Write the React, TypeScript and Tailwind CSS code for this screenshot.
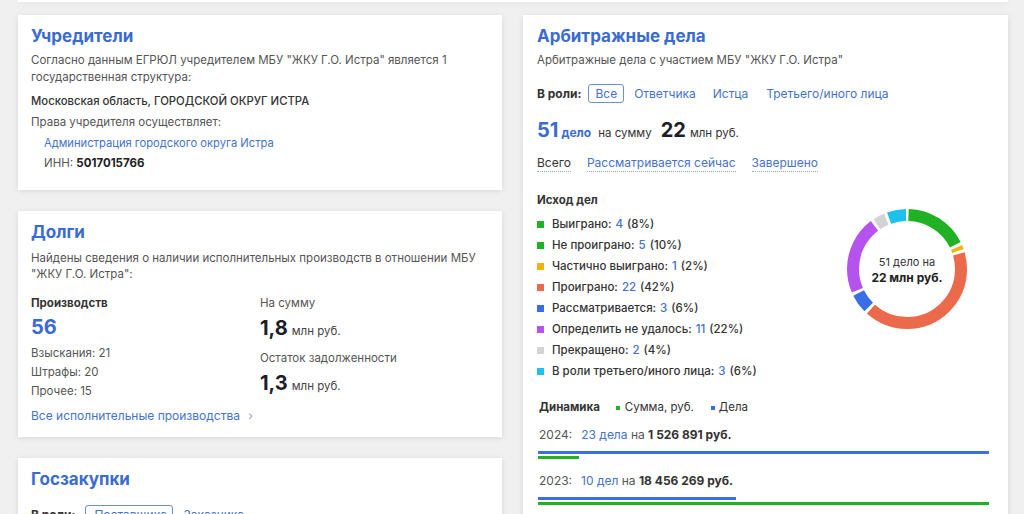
import React from "react";

const segs = [
  { p: 18, c: "#20b224" },
  { p: 2, c: "#f2b20c" },
  { p: 42, c: "#ea6a4b" },
  { p: 6, c: "#3a6ee6" },
  { p: 22, c: "#b553ee" },
  { p: 4, c: "#d3d3d3" },
  { p: 6, c: "#1fc0ee" },
];

function Donut() {
  const r = 54;
  const C = 2 * Math.PI * r;
  const gap = 3;
  let acc = 0;
  return (
    <div className="relative w-[120px] h-[120px]">
      <svg width="120" height="120" viewBox="0 0 120 120" className="-rotate-90">
        {segs.map((s, i) => {
          const len = (s.p / 100) * C;
          const el = (
            <circle
              key={i}
              cx="60"
              cy="60"
              r={r}
              fill="none"
              stroke={s.c}
              strokeWidth="12"
              strokeDasharray={`${len - gap} ${C - len + gap}`}
              strokeDashoffset={-(acc + gap / 2)}
            />
          );
          acc += len;
          return el;
        })}
      </svg>
      <div className="absolute inset-0 flex flex-col items-center justify-center pt-[2px]">
        <div className="text-[11px] leading-[15px] text-[#333]">51 дело на</div>
        <div className="text-[12px] leading-[15px] font-bold text-[#222]">22 млн руб.</div>
      </div>
    </div>
  );
}

const legend = [
  { c: "#20b224", t: "Выиграно:", n: "4", p: "(8%)" },
  { c: "#20b224", t: "Не проиграно:", n: "5", p: "(10%)" },
  { c: "#f2b20c", t: "Частично выиграно:", n: "1", p: "(2%)" },
  { c: "#ea6a4b", t: "Проиграно:", n: "22", p: "(42%)" },
  { c: "#3a6ee6", t: "Рассматривается:", n: "3", p: "(6%)" },
  { c: "#b553ee", t: "Определить не удалось:", n: "11", p: "(22%)" },
  { c: "#d3d3d3", t: "Прекращено:", n: "2", p: "(4%)" },
  { c: "#1fc0ee", t: "В роли третьего/иного лица:", n: "3", p: "(6%)" },
];

const card = "bg-white shadow-[0_1px_6px_rgba(0,0,0,0.10)]";
const title = "text-[17px] leading-[24px] font-bold text-[#3a6bd3]";

export default function App() {
  return (
    <div className="h-[514px] overflow-hidden bg-[#f0f0f0] font-['Inter',sans-serif] text-[11.5px] text-[#555]">
      <div className={`h-[2px] ml-[18px] mr-[16px] ${card}`} />
      <div className="grid grid-cols-[484px_485px] gap-[21px] pl-[18px] pr-[16px] mt-[13px] items-start">
        {/* left column */}
        <div className="flex flex-col gap-[21px]">
          <div className={`${card} pt-[9px] px-[13px] pb-[18px]`}>
            <div className={title}>Учредители</div>
            <div className="mt-[4px] leading-[17px]">
              Согласно данным ЕГРЮЛ учредителем МБУ "ЖКУ Г.О. Истра" является 1 государственная структура:
            </div>
            <div className="mt-[7px] leading-[17px] text-[11.3px] font-medium text-[#333]">
              Московская область, ГОРОДСКОЙ ОКРУГ ИСТРА
            </div>
            <div className="mt-[4px] leading-[17px]">Права учредителя осуществляет:</div>
            <div className="pl-[13px]">
              <div className="mt-[4px] leading-[17px] text-[#4573c9] text-[11.2px]">Администрация городского округа Истра</div>
              <div className="mt-[3px] leading-[17px]">
                ИНН: <span className="font-bold text-[#222]">5017015766</span>
              </div>
            </div>
          </div>

          <div className={`${card} pt-[9px] px-[13px] pb-[13px]`}>
            <div className={title}>Долги</div>
            <div className="mt-[6px] leading-[16px]">
              Найдены сведения о наличии исполнительных производств в отношении МБУ "ЖКУ Г.О. Истра":
            </div>
            <div className="grid grid-cols-2 mt-[13px]">
              <div>
                <div className="leading-[17px] font-bold text-[#333]">Производств</div>
                <div className="mt-[3px] leading-[24px] text-[20px] font-bold text-[#3a6bd3]">56</div>
                <div className="mt-[5px] leading-[19px]">Взыскания: 21</div>
                <div className="leading-[19px]">Штрафы: 20</div>
                <div className="leading-[19px]">Прочее: 15</div>
              </div>
              <div>
                <div className="leading-[17px]">На сумму</div>
                <div className="mt-[4px] leading-[24px]">
                  <span className="text-[20px] font-bold text-[#1e1e2a]">1,8</span>
                  <span className="ml-[4px] text-[#444]">млн руб.</span>
                </div>
                <div className="mt-[7px] leading-[17px]">Остаток задолженности</div>
                <div className="mt-[4px] leading-[24px]">
                  <span className="text-[20px] font-bold text-[#1e1e2a]">1,3</span>
                  <span className="ml-[4px] text-[#444]">млн руб.</span>
                </div>
              </div>
            </div>
            <div className="mt-[6px] leading-[17px] text-[12px] text-[#4573c9]">
              Все исполнительные производства <span className="ml-[5px] text-[#8aa3d6]">›</span>
            </div>
          </div>

          <div className={`${card} pt-[9px] px-[13px] pb-[20px]`}>
            <div className={title}>Госзакупки</div>
            <div className="mt-[14px] flex items-center gap-[10px] text-[12px]">
              <span className="font-bold text-[#333]">В роли:</span>
              <span className="h-[19px] w-[88px] px-[8px] flex items-center rounded-[3px] border border-[#6d8fce] text-[#4573c9]">Поставщика</span>
              <span className="text-[#4573c9]">Заказчика</span>
            </div>
          </div>
        </div>

        {/* right column */}
        <div className={`${card} pt-[9px] pl-[14px] pr-[14px] pb-[20px]`}>
          <div className={title}>Арбитражные дела</div>
          <div className="mt-[4px] leading-[17px]">Арбитражные дела с участием МБУ "ЖКУ Г.О. Истра"</div>
          <div className="mt-[15px] flex items-center h-[19px] text-[12px]">
            <span className="font-bold text-[#333]">В роли:</span>
            <span className="ml-[7px] h-[19px] px-[6px] flex items-center rounded-[3px] border border-[#6d8fce] text-[#4573c9]">Все</span>
            <span className="ml-[10px] text-[#4573c9]">Ответчика</span>
            <span className="ml-[17px] text-[#4573c9]">Истца</span>
            <span className="ml-[18px] text-[#4573c9]">Третьего/иного лица</span>
          </div>
          <div className="mt-[15px] flex items-baseline leading-[24px]">
            <span className="text-[20px] font-bold text-[#3a6bd3]">51</span>
            <span className="ml-[3px] text-[12px] font-bold text-[#3a6bd3]">дело</span>
            <span className="ml-[7px] text-[#333]">на сумму</span>
            <span className="ml-[9px] text-[20px] font-bold text-[#1e1e2a]">22</span>
            <span className="ml-[4px] text-[#333]">млн руб.</span>
          </div>
          <div className="mt-[10px] flex items-center gap-[16px] leading-[16px] text-[12px]">
            <span className="text-[#333] border-b border-dotted border-[#9aa9c6]">Всего</span>
            <span className="text-[#4573c9] border-b border-dotted border-[#9aa9c6]">Рассматривается сейчас</span>
            <span className="text-[#4573c9] border-b border-dotted border-[#9aa9c6]">Завершено</span>
          </div>

          <div className="mt-[20px] flex justify-between">
            <div>
              <div className="leading-[17px] font-bold text-[#333]">Исход дел</div>
              <div className="mt-[5px]">
                {legend.map((l, i) => (
                  <div key={i} className="h-[21px] flex items-center font-medium text-[#333]">
                    <span className="w-[7px] h-[7px] mr-[8px]" style={{ background: l.c }} />
                    <span>{l.t}</span>
                    <span className="ml-[4px] text-[#4573c9]">{l.n}</span>
                    <span className="ml-[4px]">{l.p}</span>
                  </div>
                ))}
              </div>
            </div>
            <div className="mt-[17px] mr-[27px]">
              <Donut />
            </div>
          </div>

          <div className="mt-[17px] pl-[2px] text-[12px]">
            <div className="flex items-center leading-[17px] text-[11.5px]">
              <span className="font-bold text-[#333]">Динамика</span>
              <span className="ml-[16px] w-[4px] h-[4px] bg-[#20b224]" />
              <span className="ml-[5px] text-[#333]">Сумма, руб.</span>
              <span className="ml-[17px] w-[4px] h-[4px] bg-[#3a6ee6]" />
              <span className="ml-[4px] text-[#333]">Дела</span>
            </div>
            <div className="mt-[10px] leading-[17px]">
              <span>2024:</span>
              <span className="ml-[9px] text-[#4573c9]">23 дела</span>
              <span> на </span>
              <span className="font-bold text-[#333]">1 526 891 руб.</span>
            </div>
            <div className="mt-[8px] w-[451px] -ml-[1px]">
              <div className="h-[3px] bg-[#3a6ee6]" style={{ width: "100%" }} />
              <div className="mt-[2px] h-[3px] bg-[#20b224]" style={{ width: "9%" }} />
            </div>
            <div className="mt-[13px] leading-[17px]">
              <span>2023:</span>
              <span className="ml-[9px] text-[#4573c9]">10 дел</span>
              <span> на </span>
              <span className="font-bold text-[#333]">18 456 269 руб.</span>
            </div>
            <div className="mt-[8px] w-[451px] -ml-[1px]">
              <div className="h-[3px] bg-[#3a6ee6]" style={{ width: "44%" }} />
              <div className="mt-[2px] h-[3px] bg-[#20b224]" style={{ width: "100%" }} />
            </div>
          </div>
        </div>
      </div>
    </div>
  );
}
